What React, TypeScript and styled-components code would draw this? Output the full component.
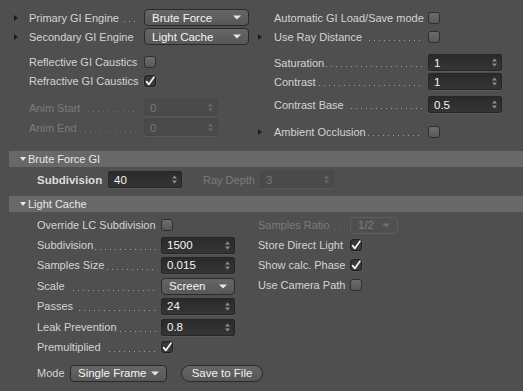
import React from "react";
import styled, { createGlobalStyle } from "styled-components";

const GlobalStyle = createGlobalStyle`
  html, body { margin: 0; padding: 0; background: #4f4f4f; }
  body {
    font-family: "Liberation Sans", Arial, sans-serif;
    font-size: 11px;
    color: #d4d4d4;
  }
`;

const Panel = styled.div`
  width: 523px;
  height: 391px;
  box-sizing: border-box;
  overflow: hidden;
  background: #4f4f4f;
  padding-left: 9px;
`;

const TopGrid = styled.div`
  display: grid;
  grid-template-columns: 249px 1fr;
  height: 151px;
  box-sizing: border-box;
  padding-top: 8px;
`;

const Column = styled.div`
  display: flex;
  flex-direction: column;
`;

const Row = styled.div<{ $h?: number; $mt?: number }>`
  display: flex;
  align-items: center;
  height: ${(p) => p.$h ?? 19}px;
  margin-top: ${(p) => p.$mt ?? 0}px;
  flex-shrink: 0;
`;

const ArrowSlot = styled.div<{ $w: number }>`
  width: ${(p) => p.$w}px;
  flex-shrink: 0;
  display: flex;
  align-items: center;
`;

const SideTriangle = styled.span<{ $ml?: number }>`
  width: 0;
  height: 0;
  margin-left: ${(p) => p.$ml ?? 0}px;
  border-top: 3.5px solid transparent;
  border-bottom: 3.5px solid transparent;
  border-left: 4px solid #1c1c1c;
`;

const Label = styled.div<{ $w: number; $dis?: boolean; $bold?: boolean }>`
  width: ${(p) => p.$w}px;
  flex-shrink: 0;
  display: flex;
  align-items: center;
  white-space: nowrap;
  color: ${(p) => (p.$dis ? "#7b7b7b" : p.$bold ? "#dcdcdc" : "#d4d4d4")};
  font-weight: ${(p) => (p.$bold ? "bold" : "normal")};
  font-size: ${(p) => (p.$bold ? "11.5px" : "11px")};
`;

const Leader = styled.span<{ $dis?: boolean; $ml?: number }>`
  flex: 1;
  height: 1px;
  margin: 0 5px 0 ${(p) => p.$ml ?? 4}px;
  transform: translateY(4px);
  background-image: linear-gradient(
    to right,
    ${(p) => (p.$dis ? "#6e6e6e" : "#a2a2a2")} 1px,
    transparent 1px
  );
  background-size: 5px 1px;
  background-repeat: repeat-x;
`;

const SpinBox = styled.div<{ $dis?: boolean; $w?: number }>`
  width: ${(p) => p.$w ?? 74}px;
  height: 17px;
  box-sizing: border-box;
  flex-shrink: 0;
  display: flex;
  align-items: center;
  justify-content: space-between;
  padding: 0 4px 0 5px;
  border-radius: 2px;
  border: 1px solid ${(p) => (p.$dis ? "#474747" : "#262626")};
  background: ${(p) =>
    p.$dis ? "#4a4a4a" : "linear-gradient(#2a2a2a, #353535)"};
  box-shadow: 0 1px 0 rgba(255, 255, 255, 0.06);
  color: ${(p) => (p.$dis ? "#787878" : "#f4f4f4")};
  font-size: 11.5px;
`;

const Dropdown = styled.div<{ $w: number; $dis?: boolean }>`
  width: ${(p) => p.$w}px;
  height: 17px;
  box-sizing: border-box;
  flex-shrink: 0;
  display: flex;
  align-items: center;
  justify-content: space-between;
  padding: 0 7px 0 7px;
  border-radius: 4px;
  border: 1px solid ${(p) => (p.$dis ? "#5f5f5f" : "#2a2a2a")};
  background: ${(p) =>
    p.$dis ? "#4f4f4f" : "linear-gradient(#666666, #575757)"};
  color: ${(p) => (p.$dis ? "#7d7d7d" : "#f4f4f4")};
  font-size: 11.5px;
`;

const PillButton = styled.div`
  width: 82px;
  height: 17px;
  box-sizing: border-box;
  margin-left: 14px;
  display: flex;
  align-items: center;
  justify-content: center;
  border-radius: 9px;
  border: 1px solid #2a2a2a;
  background: linear-gradient(#666666, #575757);
  color: #f2f2f2;
  font-size: 11.5px;
`;

const Check = styled.div<{ $on?: boolean }>`
  width: 12px;
  height: 12px;
  box-sizing: border-box;
  flex-shrink: 0;
  border-radius: 3px;
  border: 1px solid ${(p) => (p.$on ? "#1f1f1f" : "#2f2f2f")};
  background: ${(p) =>
    p.$on ? "linear-gradient(#353535, #3c3c3c)" : "linear-gradient(#6d6d6d, #585858)"};
  box-shadow: ${(p) => (p.$on ? "0 0 0 0.5px #5e5e5e" : "none")};
  display: flex;
  align-items: center;
  justify-content: center;
`;

const SectionHeader = styled.div<{ $mt?: number }>`
  height: 16px;
  margin-top: ${(p) => p.$mt ?? 0}px;
  background: #686868;
  display: flex;
  align-items: center;
  padding-left: 11px;
  color: #e8e8e8;
  font-size: 11px;
`;

const DownTriangle = styled.span`
  width: 0;
  height: 0;
  margin-right: 2px;
  border-left: 3.5px solid transparent;
  border-right: 3.5px solid transparent;
  border-top: 4px solid #e8e8e8;
`;

const BruteRow = styled.div`
  height: 25px;
  display: flex;
  align-items: center;
  padding-left: 28px;
`;

const Spacer = styled.div<{ $w: number }>`
  width: ${(p) => p.$w}px;
  flex-shrink: 0;
`;

const LCBody = styled.div`
  padding-left: 28px;
  padding-top: 3px;
`;

const LCGrid = styled.div`
  display: grid;
  grid-template-columns: 221px 1fr;
`;

const Arrows = ({ dis }: { dis?: boolean }) => (
  <svg width="5" height="9" viewBox="0 0 5 9">
    <path d="M2.5 0.5 L5 3.5 L0 3.5 Z" fill={dis ? "#6a6a6a" : "#8f8f8f"} />
    <path d="M0 5.5 L5 5.5 L2.5 8.5 Z" fill={dis ? "#6a6a6a" : "#8f8f8f"} />
  </svg>
);

const DownArrow = ({ dis }: { dis?: boolean }) => (
  <svg width="8" height="5" viewBox="0 0 8 5">
    <path d="M0 0.5 L8 0.5 L4 4.5 Z" fill={dis ? "#6e6e6e" : "#e6e6e6"} />
  </svg>
);

const Tick = () => (
  <svg width="10" height="10" viewBox="0 0 10 10">
    <path
      d="M1.6 5.6 L3.8 8.4 L8.9 1.2"
      fill="none"
      stroke="#f4f4f4"
      strokeWidth="1.7"
      strokeLinecap="round"
      strokeLinejoin="round"
    />
  </svg>
);

const Spin = ({ v, dis, w }: { v: string; dis?: boolean; w?: number }) => (
  <SpinBox $dis={dis} $w={w}>
    <span>{v}</span>
    <Arrows dis={dis} />
  </SpinBox>
);

const Drop = ({ v, w, dis }: { v: string; w: number; dis?: boolean }) => (
  <Dropdown $w={w} $dis={dis}>
    <span>{v}</span>
    <DownArrow dis={dis} />
  </Dropdown>
);

const Lbl = ({
  text,
  w,
  dots,
  dis,
  ml,
}: {
  text: string;
  w: number;
  dots?: boolean;
  dis?: boolean;
  ml?: number;
}) => (
  <Label $w={w} $dis={dis}>
    <span>{text}</span>
    {dots && <Leader $dis={dis} $ml={ml} />}
  </Label>
);

export default function App() {
  return (
    <>
      <GlobalStyle />
      <Panel>
        <TopGrid>
          <Column>
            <Row>
              <ArrowSlot $w={20}>
                <SideTriangle $ml={5} />
              </ArrowSlot>
              <Lbl text="Primary GI Engine" w={115} dots ml={5} />
              <Drop v="Brute Force" w={105} />
            </Row>
            <Row>
              <ArrowSlot $w={20}>
                <SideTriangle $ml={5} />
              </ArrowSlot>
              <Lbl text="Secondary GI Engine" w={115} />
              <Drop v="Light Cache" w={105} />
            </Row>
            <Row $mt={6}>
              <ArrowSlot $w={20} />
              <Lbl text="Reflective GI Caustics" w={115} />
              <Check />
            </Row>
            <Row>
              <ArrowSlot $w={20} />
              <Lbl text="Refractive GI Caustics" w={115} />
              <Check $on>
                <Tick />
              </Check>
            </Row>
            <Row $mt={8}>
              <ArrowSlot $w={20} />
              <Lbl text="Anim Start" w={115} dots dis ml={8} />
              <Spin v="0" dis />
            </Row>
            <Row $mt={1}>
              <ArrowSlot $w={20} />
              <Lbl text="Anim End" w={115} dots dis ml={3} />
              <Spin v="0" dis />
            </Row>
          </Column>
          <Column>
            <Row>
              <ArrowSlot $w={16} />
              <Lbl text="Automatic GI Load/Save mode" w={154} />
              <Check />
            </Row>
            <Row>
              <ArrowSlot $w={16}>
                <SideTriangle />
              </ArrowSlot>
              <Lbl text="Use Ray Distance" w={154} dots ml={7} />
              <Check />
            </Row>
            <Row $mt={7}>
              <ArrowSlot $w={16} />
              <Lbl text="Saturation" w={154} dots ml={2} />
              <Spin v="1" />
            </Row>
            <Row>
              <ArrowSlot $w={16} />
              <Lbl text="Contrast" w={154} dots ml={3} />
              <Spin v="1" />
            </Row>
            <Row $mt={4}>
              <ArrowSlot $w={16} />
              <Lbl text="Contrast Base" w={154} dots ml={7} />
              <Spin v="0.5" />
            </Row>
            <Row $mt={8}>
              <ArrowSlot $w={16}>
                <SideTriangle />
              </ArrowSlot>
              <Lbl text="Ambient Occlusion" w={154} dots ml={2} />
              <Check />
            </Row>
          </Column>
        </TopGrid>

        <SectionHeader>
          <DownTriangle />
          Brute Force GI
        </SectionHeader>
        <BruteRow>
          <Label $w={71} $bold>
            Subdivision
          </Label>
          <Spin v="40" />
          <Spacer $w={21} />
          <Lbl text="Ray Depth" w={57} dis />
          <Spin v="3" dis />
        </BruteRow>

        <SectionHeader $mt={4}>
          <DownTriangle />
          Light Cache
        </SectionHeader>
        <LCBody>
          <LCGrid>
            <Column>
              <Row $h={20}>
                <Lbl text="Override LC Subdivision" w={124} />
                <Check />
              </Row>
              <Row $h={20}>
                <Lbl text="Subdivision" w={124} dots ml={2} />
                <Spin v="1500" />
              </Row>
              <Row $h={20}>
                <Lbl text="Samples Size" w={124} dots ml={3} />
                <Spin v="0.015" />
              </Row>
              <Row $h={20} $mt={1}>
                <Lbl text="Scale" w={124} dots ml={8} />
                <Drop v="Screen" w={74} />
              </Row>
              <Row $h={20}>
                <Lbl text="Passes" w={124} dots ml={6} />
                <Spin v="24" />
              </Row>
              <Row $h={20} $mt={1}>
                <Lbl text="Leak Prevention" w={124} dots ml={3} />
                <Spin v="0.8" />
              </Row>
              <Row $h={20}>
                <Lbl text="Premultiplied" w={124} dots ml={8} />
                <Check $on>
                  <Tick />
                </Check>
              </Row>
            </Column>
            <Column>
              <Row $h={20}>
                <Lbl text="Samples Ratio" w={92} dots dis ml={4} />
                <Drop v="1/2" w={48} dis />
              </Row>
              <Row $h={20}>
                <Lbl text="Store Direct Light" w={92} />
                <Check $on>
                  <Tick />
                </Check>
              </Row>
              <Row $h={20}>
                <Lbl text="Show calc. Phase" w={92} />
                <Check $on>
                  <Tick />
                </Check>
              </Row>
              <Row $h={19}>
                <Lbl text="Use Camera Path" w={92} />
                <Check />
              </Row>
            </Column>
          </LCGrid>
          <Row $h={20} $mt={6}>
            <Lbl text="Mode" w={33} />
            <Drop v="Single Frame" w={97} />
            <PillButton>Save to File</PillButton>
          </Row>
        </LCBody>
      </Panel>
    </>
  );
}
